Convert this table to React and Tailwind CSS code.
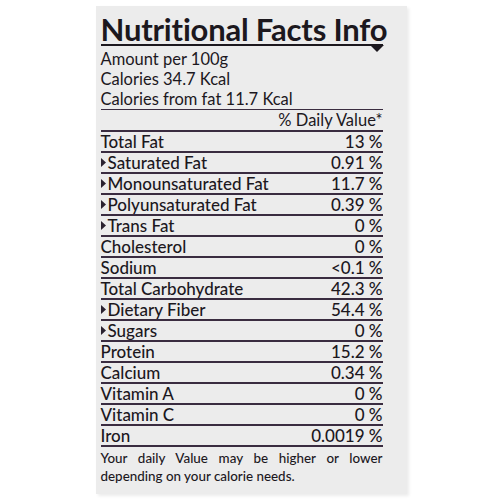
import React from "react";

const rows = [
  { label: "Total Fat", value: "13 %" },
  { label: "Saturated Fat", value: "0.91 %", sub: true },
  { label: "Monounsaturated Fat", value: "11.7 %", sub: true },
  { label: "Polyunsaturated Fat", value: "0.39 %", sub: true },
  { label: "Trans Fat", value: "0 %", sub: true },
  { label: "Cholesterol", value: "0 %" },
  { label: "Sodium", value: "<0.1 %" },
  { label: "Total Carbohydrate", value: "42.3 %" },
  { label: "Dietary Fiber", value: "54.4 %", sub: true },
  { label: "Sugars", value: "0 %", sub: true },
  { label: "Protein", value: "15.2 %" },
  { label: "Calcium", value: "0.34 %" },
  { label: "Vitamin A", value: "0 %" },
  { label: "Vitamin C", value: "0 %" },
  { label: "Iron", value: "0.0019 %" },
];

const Marker = () => (
  <svg width="5" height="9" viewBox="0 0 5 9" className="mr-[2px] shrink-0">
    <polygon points="0,0 5,4.5 0,9" fill="#2a2230" />
  </svg>
);

const App = () => {
  return (
    <div
      className="w-[500px] h-[500px] bg-white flex justify-center"
      style={{ fontFamily: "Lato, 'Open Sans', sans-serif" }}
    >
      <div className="w-[311px] h-[488px] mt-[6px] ml-[2px] bg-[#ececec] pl-[5px] pr-[24px] text-[#1c181e] shadow-[2px_2px_3px_rgba(0,0,0,0.08)]">
        <div className="relative pt-[8px] h-[40px] border-b-2 border-[#1c181e]">
          <h1 className="text-[31px] font-bold leading-[31px] tracking-[-0.2px] whitespace-nowrap">
            Nutritional Facts Info
          </h1>
          <div className="absolute right-[-1px] bottom-[-8px] w-0 h-0 border-l-[7px] border-r-[7px] border-t-[7px] border-l-transparent border-r-transparent border-t-[#1c181e]" />
        </div>

        <div className="text-[16.5px] leading-[20px] pt-[3px] h-[64px] border-b border-[#3a2c40]">
          <p>Amount per 100g</p>
          <p>Calories 34.7 Kcal</p>
          <p>Calories from fat 11.7 Kcal</p>
        </div>

        <div className="h-[22px] border-b-2 border-[#3a2c40] text-right text-[16.5px] leading-[20px]">
          % Daily Value*
        </div>

        {rows.map((r) => (
          <div
            key={r.label}
            className="h-[21px] border-b-2 border-[#3a2c40] flex justify-between items-end text-[17px] leading-[19px] font-medium"
          >
            <span className="flex items-center">
              {r.sub && <Marker />}
              {r.label}
            </span>
            <span>{r.value}</span>
          </div>
        ))}

        <p className="text-[13.4px] leading-[18px] pt-[2px] font-medium text-justify [text-align-last:left]">
          Your daily Value may be higher or lower depending on your calorie needs.
        </p>
      </div>
    </div>
  );
};

export default App;
